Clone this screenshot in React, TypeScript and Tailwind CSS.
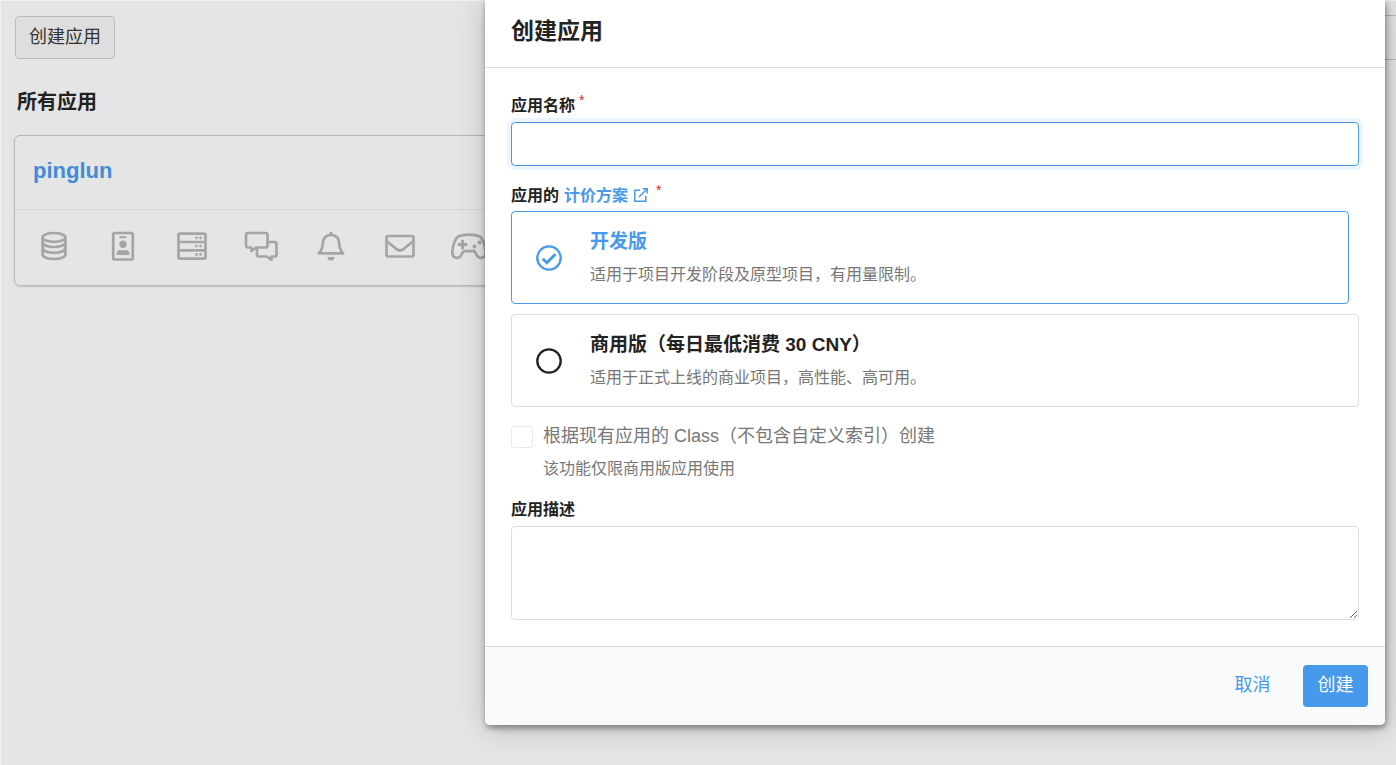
import React, { useState } from 'react';

const iconProps = {
  viewBox: '0 0 34 30',
  width: 34,
  height: 30,
  fill: 'none',
  stroke: 'currentColor',
  strokeWidth: 2.7,
  strokeLinejoin: 'round' as const,
};

const DatabaseIcon = () => (
  <svg {...iconProps}>
    <ellipse cx="17" cy="6.400" rx="11.400" ry="4.400" />
    <path d="M5.600 6.400v17.200c0 2.500 5 4.400 11.400 4.400s11.400-1.900 11.400-4.400V6.400" />
    <path d="M5.600 12c1.600 2.600 6 4 11.400 4s9.800-1.400 11.400-4M5.600 17.800c1.600 2.600 6 4 11.400 4s9.800-1.400 11.400-4" />
  </svg>
);

const BadgeIcon = () => (
  <svg {...iconProps}>
    <rect x="7.200" y="2" width="19.600" height="26.500" rx="1.500" />
    <path d="M13.500 6.200h7" strokeWidth="2" />
    <circle cx="17" cy="13.300" r="3.700" fill="currentColor" stroke="none" />
    <path d="M10.600 24v-1.800c0-2 1.600-3.300 3.400-3.300 1 .6 5 .6 6 0 1.800 0 3.400 1.300 3.400 3.300V24z" fill="currentColor" stroke="none" />
  </svg>
);

const ServerIcon = () => (
  <svg {...iconProps}>
    <rect x="3.500" y="2.600" width="27" height="25" rx="1.500" />
    <path d="M3.500 11h27M3.500 19.300h27" />
    <g fill="currentColor" stroke="none">
      <circle cx="21.500" cy="6.800" r="1.400" />
      <circle cx="25.500" cy="6.800" r="1.400" />
      <circle cx="21.500" cy="15.100" r="1.400" />
      <circle cx="25.500" cy="15.100" r="1.400" />
      <circle cx="21.500" cy="23.400" r="1.400" />
      <circle cx="25.500" cy="23.400" r="1.400" />
    </g>
  </svg>
);

const CommentsIcon = () => (
  <svg {...iconProps}>
    <path d="M4 2h17.500a2 2 0 0 1 2 2v10.500a2 2 0 0 1-2 2h-9.300L7.400 20v-3.500H4a2 2 0 0 1-2-2V4a2 2 0 0 1 2-2z" />
    <path d="M23.500 11h7a2 2 0 0 1 2 2v10.500a2 2 0 0 1-2 2h-3V29l-4.600-3.500H15a2 2 0 0 1-2-2v-7" />
  </svg>
);

const BellIcon = () => (
  <svg {...iconProps}>
    <path d="M17 .800v3" />
    <path d="M17 3.800c-5 0-8.200 3.700-8.200 8.200 0 6-1.600 8-4 10.400h24.400c-2.400-2.400-4-4.400-4-10.400 0-4.500-3.200-8.200-8.200-8.200z" />
    <path d="M13.500 26h7a3.500 3.500 0 0 1-7 0z" fill="currentColor" stroke="none" />
  </svg>
);

const MailIcon = () => (
  <svg {...iconProps}>
    <rect x="3.500" y="5" width="27" height="20.500" rx="1.800" />
    <path d="M3.500 10l10.200 8.200c2.400 1.800 4.200 1.800 6.600 0L30.500 10" />
  </svg>
);

const GamepadIcon = () => (
  <svg {...iconProps} viewBox="0 0 38 30" width="38">
    <path d="M8 5.500c6-2.600 16-2.600 22 0 3.600 3 6 11.500 5.600 17 0 3.700-5.500 6.200-8 2.700l-3.200-5H13.600l-3.200 5c-2.500 3.500-8 1-8-2.700C2 17 4.400 8.500 8 5.500z" />
    <path d="M7.800 13.500h9.400M12.500 8.800v9.400" strokeWidth="2.800" />
    <circle cx="24.500" cy="15.500" r="1.900" fill="currentColor" stroke="none" />
    <circle cx="29.500" cy="11.500" r="1.900" fill="currentColor" stroke="none" />
  </svg>
);

const services = [
  { name: '数据存储', Icon: DatabaseIcon },
  { name: '内建账户', Icon: BadgeIcon },
  { name: '云引擎', Icon: ServerIcon },
  { name: '即时通讯', Icon: CommentsIcon },
  { name: '推送', Icon: BellIcon },
  { name: '短信', Icon: MailIcon },
  { name: '游戏', Icon: GamepadIcon },
];

const plans = [
  { id: 'dev', title: '开发版', text: '适用于项目开发阶段及原型项目，有用量限制。' },
  { id: 'business', title: '商用版（每日最低消费 30 CNY）', text: '适用于正式上线的商业项目，高性能、高可用。' },
];

const RadioMark: React.FC<{ checked: boolean }> = ({ checked }) => (
  <svg viewBox="0 0 26 26" width="26" height="26" fill="none" stroke="currentColor" aria-hidden="true">
    <circle cx="13" cy="13" r="11.700" strokeWidth="2.300" />
    {checked && <path d="M6.800 13.800l4 4 8.600-8.600" strokeWidth="2.900" />}
  </svg>
);

const Required = () => <sup className="top-0 ml-1 self-start text-sm leading-3 font-normal text-[#e02020]">*</sup>;

const Dashboard = () => (
  <div className="min-h-screen border-t border-l border-[#f0f0f0] bg-[#e5e5e5] pt-[14px]">
    <div className="flex items-center justify-between pl-[14px]">
      <button type="button" className="h-[43px] rounded border border-[#bbb] bg-[#dedede] px-[13px] pb-0.5 text-lg leading-6 text-[#333]">
        创建应用
      </button>
      <input type="search" aria-label="搜索应用" className="h-[45px] w-48 border-y border-[#b8b8b8]" />
    </div>
    <h2 className="mt-[26px] pl-4 text-xl leading-8 font-bold">所有应用</h2>
    <section className="mt-[17px] mr-4 ml-[13px] rounded-md border border-[#b8b8b8] shadow-[0_1px_2px_rgba(0,0,0,0.15)]">
      <h3 className="flex h-[74px] items-center border-b border-[#d6d6d6] px-[18px] pb-1 text-[22px] leading-8 font-bold">
        <a href="#pinglun" className="text-[#418cd6]">pinglun</a>
      </h3>
      <ul className="ml-1 grid h-[75px] w-[485px] grid-cols-7 items-center pb-[3px] text-[#a5a5a5]">
        {services.map(({ name, Icon }) => (
          <li key={name}>
            <a href="#pinglun" aria-label={name} className="flex justify-center">
              <Icon />
            </a>
          </li>
        ))}
      </ul>
    </section>
  </div>
);

const CreateAppDialog = () => {
  const [plan, setPlan] = useState('dev');

  return (
    <form
      role="dialog"
      aria-labelledby="dialog-title"
      className="absolute top-0 right-[11px] w-[900px] max-w-full rounded-b-[5px] bg-white shadow-[1px_3px_6px_rgba(0,0,0,0.4),1px_3px_30px_rgba(0,0,0,0.2)]"
    >
      <header className="flex h-[68px] items-center border-b border-[#dddedf] px-[26px] pb-1.5">
        <h1 id="dialog-title" className="text-[23px] leading-8 font-bold">创建应用</h1>
      </header>

      <div className="px-[26px] pt-[26px] pb-[26px]">
        <label htmlFor="app-name" className="flex h-6 items-center text-base leading-6 font-bold">
          应用名称<Required />
        </label>
        <input
          id="app-name"
          type="text"
          className="mt-1 block h-11 w-full rounded border border-[#4799eb] px-3 text-lg shadow-[0_0_0_4px_#ecf5fd] outline-none"
        />

        <fieldset className="mt-[18px]">
          <legend className="flex h-6 items-center text-base leading-6 font-bold">
            应用的
            <a href="#pricing" className="ml-[5px] flex items-center text-[#4799eb]">
              计价方案
              <svg viewBox="0 0 14 14" width="14" height="14" fill="none" stroke="currentColor" strokeWidth="1.500" className="mb-0.5 ml-1.5">
                <path d="M6 2.200H.800v11h11V8M8.500.800h4.800v4.800M13 1L5 9" />
              </svg>
            </a>
            <span className="ml-1 flex self-stretch"><Required /></span>
          </legend>
          <div className="mt-[3px] flex flex-col gap-[10px]">
            {plans.map(({ id, title, text }) => {
              const checked = plan === id;
              return (
                <label
                  key={id}
                  className={`flex h-[93px] items-center rounded border pl-6 ${checked ? 'mr-[10px] border-[#4799eb]' : 'border-[#dcdddd]'}`}
                >
                  <input type="radio" name="plan" value={id} checked={checked} onChange={() => setPlan(id)} className="sr-only" />
                  <span className={checked ? 'text-[#4799eb]' : 'text-[#222]'}>
                    <RadioMark checked={checked} />
                  </span>
                  <span className="ml-[28px] flex flex-col gap-[3px]">
                    <span className={`text-[19px] leading-8 font-bold ${checked ? 'text-[#4799eb]' : ''}`}>{title}</span>
                    <span className="text-base leading-7 text-[#777]">{text}</span>
                  </span>
                </label>
              );
            })}
          </div>
        </fieldset>

        <div className="mt-[15px] flex items-start gap-[10px] text-[#777]">
          <input
            id="copy-classes"
            type="checkbox"
            disabled
            aria-describedby="copy-hint"
            className="mt-1 h-[22px] w-[22px] appearance-none rounded-[3px] border border-[#e9eaea] bg-white"
          />
          <div>
            <label htmlFor="copy-classes" className="block text-lg leading-7">
              根据现有应用的 Class（不包含自定义索引）创建
            </label>
            <p id="copy-hint" className="mt-[5px] text-base leading-7">该功能仅限商用版应用使用</p>
          </div>
        </div>

        <label htmlFor="app-desc" className="mt-[15px] block text-base leading-6 font-bold">应用描述</label>
        <textarea id="app-desc" className="mt-1 block h-[94px] w-full rounded border border-[#dcdddd] px-3 py-2 text-lg outline-none" />
      </div>

      <footer className="flex items-center justify-end gap-[18px] rounded-b-[5px] border-t border-[#d6d8da] bg-[#f9fafc] px-[17px] py-[18px]">
        <button type="button" className="h-[42px] min-w-[65px] rounded px-[14px] pb-0.5 text-lg leading-6 text-[#4799eb]">取消</button>
        <button type="submit" className="h-[42px] min-w-[65px] rounded bg-[#4799eb] px-[14px] pb-0.5 text-lg leading-6 text-white">创建</button>
      </footer>
    </form>
  );
};

const App = () => (
  <div className="relative overflow-hidden font-['Liberation_Sans','Noto_Sans_CJK_SC',sans-serif] text-[#222]">
    <Dashboard />
    <CreateAppDialog />
  </div>
);

export default App;
